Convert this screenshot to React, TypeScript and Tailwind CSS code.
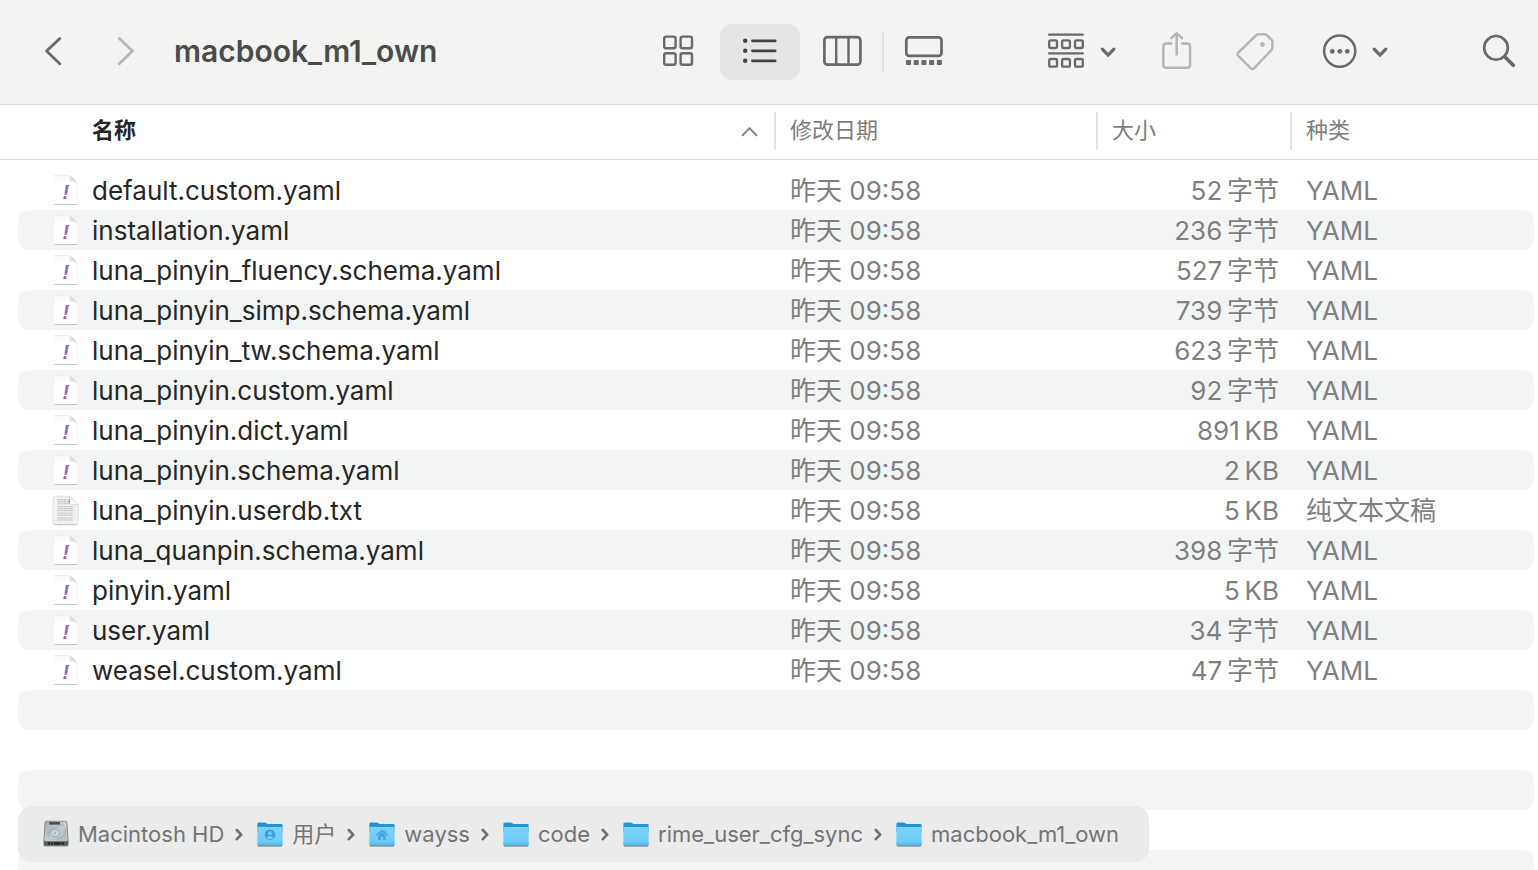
import type { ReactNode } from 'react';

type FileKind = 'yaml' | 'text';

interface FileEntry {
  name: string;
  date: string;
  size: string;
  type: string;
  icon: FileKind;
}

const yaml = (name: string, size: string): FileEntry => ({
  name,
  date: '昨天 09:58',
  size,
  type: 'YAML',
  icon: 'yaml',
});

const files: FileEntry[] = [
  yaml('default.custom.yaml', '52\u2009字节'),
  yaml('installation.yaml', '236\u2009字节'),
  yaml('luna_pinyin_fluency.schema.yaml', '527\u2009字节'),
  yaml('luna_pinyin_simp.schema.yaml', '739\u2009字节'),
  yaml('luna_pinyin_tw.schema.yaml', '623\u2009字节'),
  yaml('luna_pinyin.custom.yaml', '92\u2009字节'),
  yaml('luna_pinyin.dict.yaml', '891\u2009KB'),
  yaml('luna_pinyin.schema.yaml', '2\u2009KB'),
  { name: 'luna_pinyin.userdb.txt', date: '昨天 09:58', size: '5\u2009KB', type: '纯文本文稿', icon: 'text' },
  yaml('luna_quanpin.schema.yaml', '398\u2009字节'),
  yaml('pinyin.yaml', '5\u2009KB'),
  yaml('user.yaml', '34\u2009字节'),
  yaml('weasel.custom.yaml', '47\u2009字节'),
];

const emptyRows = [13, 14, 15, 16, 17];

function YamlIcon() {
  return (
    <svg className="h-8 w-7 shrink-0" viewBox="0 0 28 32" aria-hidden="true">
      <defs>
        <linearGradient id="fold" x1="0" y1="1" x2="1" y2="0">
          <stop offset="0" stopColor="#fafafa" />
          <stop offset="0.5" stopColor="#dcdcdc" />
          <stop offset="1" stopColor="#f4f4f4" />
        </linearGradient>
        <linearGradient id="sheet" x1="0" y1="0" x2="0" y2="1">
          <stop offset="0" stopColor="#f7f7f7" />
          <stop offset="0.3" stopColor="#ffffff" />
        </linearGradient>
      </defs>
      <path d="M2.5 1.2H16.5Q21 2.5 25.2 9.5V30.5H2.5Z" fill="url(#sheet)" />
      <path d="M25.3 9.5V30.3" stroke="#f0f0f0" strokeWidth="0.7" />
      <path d="M2.5 1.4H16" stroke="#e6e6e6" strokeWidth="0.9" />
      <path d="M16 1.2C18.2 2.6 17.6 5.4 17.8 7.2C20.6 7 23.6 7.4 25.2 10C24.4 6 20.5 1.8 16 1.2Z" fill="url(#fold)" />
      <path d="M2.5 30.5H25.4" stroke="#c8c8c8" strokeWidth="1" />
      <text x="10.6" y="24.6" fontFamily="Liberation Sans, sans-serif" fontSize="20" fontWeight="700" fontStyle="italic" fill="#9163b3">
        !
      </text>
    </svg>
  );
}

function TextIcon() {
  return (
    <svg className="h-8 w-7 shrink-0" viewBox="0 0 28 32" aria-hidden="true">
      <path d="M3 2.2H17.5L26.3 10.6V28.5Q26.3 30.6 24.2 30.6H3Q1 30.6 1 28.5V4.2Q1 2.2 3 2.2Z" fill="#f1f1f1" stroke="#dadada" strokeWidth="0.8" />
      <path d="M2 30.7H25.4" stroke="#bcbcbc" strokeWidth="0.8" />
      <path
        d="M5.5 5.8H16M5.5 7.8H16.5M5.5 9.8H17M5.5 12.6H21.5M5.5 14.6H20.5M5.5 16.6H21.5M5.5 19.2H21M5.5 21.2H21.5M5.5 24H21M5.5 26H20.5"
        stroke="#bdbdbd"
        strokeWidth="1"
        strokeDasharray="3.2 0.5 1.8 0.4"
      />
      <path d="M17.5 2.2L26.3 10.6H19.2Q17.5 10.6 17.5 8.8Z" fill="#fafafa" stroke="#d0d0d0" strokeWidth="0.6" />
      <path d="M17.3 5V9.6" stroke="#8c8c8c" strokeWidth="1" />
    </svg>
  );
}

function FolderIcon({ badge }: { badge?: ReactNode }) {
  return (
    <svg className="h-7 w-[26px] shrink-0" viewBox="0 0 26 28" aria-hidden="true">
      <defs>
        <linearGradient id="front" x1="0" y1="0" x2="0" y2="1">
          <stop offset="0" stopColor="#79d2fb" />
          <stop offset="1" stopColor="#6bc8f7" />
        </linearGradient>
      </defs>
      <path d="M1 26.4H25" stroke="#a9a9a9" strokeWidth="1" />
      <path d="M0.4 4Q0.4 2.6 1.8 2.6H7.6Q8.6 2.6 9.4 3.2L10.4 3.9H24.2Q25.6 3.9 25.6 5.3V12H0.4Z" fill="#1e93d6" />
      <path d="M0.4 7.2H25.6V24.6Q25.6 26 24.2 26H1.8Q0.4 26 0.4 24.6Z" fill="url(#front)" />
      <path d="M0.4 7.4H25.6" stroke="#8edbfd" strokeWidth="0.8" />
      <path d="M0.4 22.6H25.6V24.6Q25.6 26 24.2 26H1.8Q0.4 26 0.4 24.6Z" fill="#5dbdf0" />
      <path d="M0.8 25.5H25.2" stroke="#3b9dd4" strokeWidth="0.8" />
      {badge}
    </svg>
  );
}

const personBadge = (
  <>
    <circle cx="13" cy="14.8" r="5.2" fill="#369fd9" />
    <circle cx="13" cy="13.2" r="1.9" fill="#74cefa" />
    <path d="M9.6 18Q10.4 15.9 13 15.9T16.4 18Q15 19.3 13 19.3T9.6 18Z" fill="#74cefa" />
  </>
);

const homeBadge = (
  <>
    <path d="M7.8 15L13 10.2L18.2 15" fill="none" stroke="#3fa5de" strokeWidth="1.3" strokeLinecap="round" strokeLinejoin="round" />
    <path d="M16 10.4H17.2V13H16Z" fill="#3fa5de" />
    <path d="M9.2 15.4L13 12L16.8 15.4V20H14.2V16.8H11.8V20H9.2Z" fill="#3fa5de" />
  </>
);

function DriveIcon() {
  return (
    <svg className="h-7 w-[26px] shrink-0" viewBox="0 0 26 28" aria-hidden="true">
      <defs>
        <linearGradient id="drive" x1="0" y1="0" x2="1" y2="1">
          <stop offset="0" stopColor="#a2aaae" />
          <stop offset="0.5" stopColor="#c3cdd2" />
          <stop offset="1" stopColor="#b0babf" />
        </linearGradient>
      </defs>
      <path d="M3.4 0.8H22.6Q24.2 0.8 24.4 2.4L25.6 21V24.4Q25.6 26.6 23.4 26.6H2.6Q0.4 26.6 0.4 24.4V21L1.6 2.4Q1.8 0.8 3.4 0.8Z" fill="#7f8588" />
      <path d="M3.6 1.4H22.4Q23.4 1.4 23.5 2.4L24.7 19.6Q24.7 21 23.4 21H2.6Q1.3 21 1.3 19.6L2.5 2.4Q2.6 1.4 3.6 1.4Z" fill="url(#drive)" />
      <path d="M6.2 2H17V4.6H6.2Z" fill="#4b4e51" />
      <path d="M20.4 5C15 4.6 15.6 8 10.8 8.2C5.6 9 3.6 14 6.2 17.6M22.6 8.6C23 14 19.8 18 14.4 18.8" fill="none" stroke="#929ca1" strokeWidth="0.7" />
      <ellipse cx="12" cy="13.2" rx="4.4" ry="3.4" fill="#cdd6db" stroke="#98a2a7" strokeWidth="0.8" />
      <circle cx="12" cy="13.2" r="1" fill="#98a2a7" />
      <path d="M1.2 21.8H24.8V24.4Q24.8 25.6 23.4 25.6H2.6Q1.2 25.6 1.2 24.4Z" fill="#56595b" />
      <path d="M5 22.4H21V24.6H5Z" fill="#1f2122" />
      <path d="M7.6 22.6V24.4M10.4 22.6V24.4M18 22.6V24.4" stroke="#8b8b8b" strokeWidth="0.8" />
      <path d="M2 26.4H24" stroke="#c9cccd" strokeWidth="0.6" />
    </svg>
  );
}

const places: { label: string; icon: ReactNode }[] = [
  { label: 'Macintosh HD', icon: <DriveIcon /> },
  { label: '用户', icon: <FolderIcon badge={personBadge} /> },
  { label: 'wayss', icon: <FolderIcon badge={homeBadge} /> },
  { label: 'code', icon: <FolderIcon /> },
  { label: 'rime_user_cfg_sync', icon: <FolderIcon /> },
  { label: 'macbook_m1_own', icon: <FolderIcon /> },
];

function ToolButton({ label, className, width, children }: { label: string; className: string; width: number; children: ReactNode }) {
  return (
    <button type="button" aria-label={label} className={`h-14 shrink-0 ${className}`}>
      <svg
        className="h-full w-full"
        viewBox={`0 0 ${width} 56`}
        fill="none"
        stroke="currentColor"
        strokeWidth="2.5"
        strokeLinecap="round"
        strokeLinejoin="round"
        aria-hidden="true"
      >
        {children}
      </svg>
    </button>
  );
}

function Toolbar() {
  return (
    <header className="flex shrink-0 items-center border-b border-[#d8d8d7] bg-[#f3f3f1] py-6 pr-[10px] pl-[26px] text-[#696967]">
      <ToolButton label="后退" className="w-14" width={56}>
        <path d="M33.8 14.4L20.6 27.1L33.8 39.8" strokeWidth="2.8" />
      </ToolButton>
      <ToolButton label="前进" className="ml-4 w-14 text-[#b5b5b3]" width={56}>
        <path d="M21.3 14.4L34.5 27.1L21.3 39.8" strokeWidth="2.8" />
      </ToolButton>
      <h1 className="ml-5 min-w-0 flex-1 truncate pb-[2px] text-[30px] leading-[54px] font-semibold text-[#4b4b4b]">macbook_m1_own</h1>

      <div className="flex items-center gap-[2px]" role="group" aria-label="显示方式">
        <ToolButton label="图标" className="w-20" width={80}>
          <g strokeWidth="2.4">
            <rect x="26.2" y="12.6" width="11.4" height="11.6" rx="2" />
            <rect x="42.6" y="12.6" width="11.4" height="11.6" rx="2" />
            <rect x="26.2" y="29.2" width="11.4" height="11.6" rx="2" />
            <rect x="42.6" y="29.2" width="11.4" height="11.6" rx="2" />
          </g>
        </ToolButton>
        <ToolButton label="列表" className="w-20 rounded-xl bg-[#e5e5e4] text-[#434342]" width={80}>
          <path d="M32.4 16.8H55.2M32.4 26.8H55.2M32.4 36.8H55.2" strokeWidth="2.7" />
          <g fill="currentColor" stroke="none">
            <circle cx="25.2" cy="16.8" r="2.2" />
            <circle cx="25.2" cy="26.8" r="2.2" />
            <circle cx="25.2" cy="36.8" r="2.2" />
          </g>
        </ToolButton>
        <ToolButton label="分栏" className="w-20" width={80}>
          <rect x="22.4" y="13.1" width="36" height="27.6" rx="3.2" strokeWidth="2.7" />
          <path d="M34.2 13.1V40.7M46.5 13.1V40.7" strokeWidth="2.4" />
        </ToolButton>
      </div>
      <span className="h-10 w-[2px] shrink-0 bg-[#e4e4e3]" />
      <ToolButton label="画廊" className="w-20" width={80}>
        <rect x="22.3" y="13.3" width="35.2" height="18.6" rx="3" strokeWidth="2.7" />
        <g fill="currentColor" stroke="none">
          <rect x="22" y="36" width="5" height="5" rx="0.8" />
          <rect x="29.7" y="36" width="5" height="5" rx="0.8" />
          <rect x="37.4" y="36" width="5" height="5" rx="0.8" />
          <rect x="45.1" y="36" width="5" height="5" rx="0.8" />
          <rect x="52.9" y="36" width="5" height="5" rx="0.8" />
        </g>
      </ToolButton>

      <ToolButton label="群组" className="ml-[76px] w-[84px]" width={84}>
        <g strokeWidth="2.3">
          <path d="M9.1 10.7H42.9M9.1 29.4H42.9" />
          <rect x="9.2" y="16.3" width="7.8" height="7.7" rx="1.4" />
          <rect x="22.1" y="16.3" width="7.8" height="7.7" rx="1.4" />
          <rect x="35" y="16.3" width="7.8" height="7.7" rx="1.4" />
          <rect x="9.2" y="35" width="7.8" height="7.7" rx="1.4" />
          <rect x="22.1" y="35" width="7.8" height="7.7" rx="1.4" />
          <rect x="35" y="35" width="7.8" height="7.7" rx="1.4" />
        </g>
        <path d="M62.3 25.2L68.1 31.2L73.9 25.2" strokeWidth="3.2" />
      </ToolButton>
      <ToolButton label="共享" className="ml-6 w-[58px] text-[#b5b5b3]" width={58}>
        <path d="M23.2 19.6H18.4Q15.3 19.6 15.3 22.7V40.7Q15.3 43.8 18.4 43.8H39Q42.1 43.8 42.1 40.7V22.7Q42.1 19.6 39 19.6H34.2M28.7 9.6V30.4M23.4 14.2L28.7 9.2L34 14.2" />
      </ToolButton>
      <ToolButton label="编辑标签" className="ml-5 w-[58px] text-[#b5b5b3]" width={58}>
        <path d="M32.6 10.3H38.8Q40 10.3 40.8 11.1L45.6 15.9Q46.4 16.7 46.4 17.9V23.6Q46.4 25 45.5 26L28.2 44.2Q26.4 46 24.6 44.2L12.3 31.9Q10.8 30.2 12.4 28.5L30 11.3Q31 10.3 32.6 10.3Z" />
        <circle cx="36.4" cy="20.5" r="2.4" fill="currentColor" stroke="none" />
      </ToolButton>
      <ToolButton label="更多" className="ml-8 w-20" width={80}>
        <circle cx="23.7" cy="27.1" r="15.6" />
        <g fill="currentColor" stroke="none">
          <circle cx="16.3" cy="27.3" r="2.4" />
          <circle cx="23.8" cy="27.3" r="2.4" />
          <circle cx="31.3" cy="27.3" r="2.4" />
        </g>
        <path d="M58.2 25.2L64 31.2L69.8 25.2" strokeWidth="3.2" />
      </ToolButton>
      <ToolButton label="搜索" className="ml-[74px] w-[58px]" width={58}>
        <circle cx="26" cy="23.8" r="11.8" strokeWidth="2.7" />
        <path d="M35 33L43.3 41.2" strokeWidth="3.7" />
      </ToolButton>
    </header>
  );
}

function ColumnHeader({ label }: { label: string }) {
  return (
    <th scope="col" className="border-b border-[#dadada] px-0 pt-[7px] pb-[9px] text-left font-normal text-[#7d7d7d]">
      <button type="button" className="flex h-[38px] w-full items-center border-l-2 border-[#e3e3e3] pb-[2px] pl-[14px]">
        {label}
      </button>
    </th>
  );
}

function FileTable() {
  return (
    <table className="w-full table-fixed border-separate border-spacing-0">
      <colgroup>
        <col />
        <col className="w-[322px]" />
        <col className="w-[194px]" />
        <col className="w-[248px]" />
      </colgroup>
      <thead className="text-[22px]">
        <tr>
          <th scope="col" aria-sort="ascending" className="border-b border-[#dadada] px-0 pt-[7px] pb-[9px] text-left font-bold text-[#262626]">
            <button type="button" className="flex h-[38px] w-full items-center justify-between pr-4 pl-[92px]">
              <span className="pb-[2px]">名称</span>
              <svg className="h-4 w-[18px] text-[#7d7d7d]" viewBox="0 0 18 16" fill="none" stroke="currentColor" strokeWidth="1.9" strokeLinecap="round" strokeLinejoin="round" aria-hidden="true">
                <path d="M2.6 12.3L9.5 5.2L16.4 12.3" />
              </svg>
            </button>
          </th>
          <ColumnHeader label="修改日期" />
          <ColumnHeader label="大小" />
          <ColumnHeader label="种类" />
        </tr>
      </thead>
      <tbody className="text-[26px] leading-[38px] text-[#7f7f7f] before:block before:h-[10px] before:content-['']">
        {files.map((file) => (
          <tr key={file.name} className="group">
            <td className="h-10 rounded-l-[28px_10px] border-l-[18px] border-transparent bg-clip-padding p-0 pl-[34px] group-even:bg-[#f3f5f4]">
              <div className="flex h-10 items-center gap-3 text-[#262626]">
                {file.icon === 'yaml' ? <YamlIcon /> : <TextIcon />}
                <span className="truncate pt-[2px]">{file.name}</span>
              </div>
            </td>
            <td className="p-0 pt-[2px] pl-4 whitespace-nowrap group-even:bg-[#f3f5f4]">{file.date}</td>
            <td className="p-0 pt-[2px] pr-[11px] text-right whitespace-nowrap group-even:bg-[#f3f5f4]">{file.size}</td>
            <td className="rounded-r-[14px_10px] border-r-4 border-transparent bg-clip-padding p-0 pt-[2px] pl-4 whitespace-nowrap group-even:bg-[#f3f5f4]">
              {file.type}
            </td>
          </tr>
        ))}
        {emptyRows.map((row) => (
          <tr key={row} className="group" aria-hidden="true">
            <td
              colSpan={4}
              className="h-10 rounded-l-[28px_10px] rounded-r-[14px_10px] border-r-4 border-l-[18px] border-transparent bg-clip-padding p-0 group-even:bg-[#f3f5f4]"
            />
          </tr>
        ))}
      </tbody>
    </table>
  );
}

function PathBar() {
  return (
    <nav aria-label="路径" className="absolute bottom-2 left-[18px] h-14 rounded-[14px] bg-[#ebebeb] pr-[30px] pl-[25px]">
      <ol className="flex h-full items-center text-[22px] text-[#747474]">
        {places.map((place, index) => (
          <li key={place.label} className="flex items-center">
            {index > 0 && (
              <svg className="mr-[14px] ml-[11px] h-4 w-2" viewBox="0 0 8 16" fill="none" stroke="#6f6f6f" strokeWidth="2.6" strokeLinecap="round" strokeLinejoin="round" aria-hidden="true">
                <path d="M1.8 4L6.2 8.7L1.8 13.2" />
              </svg>
            )}
            <a href={`#${place.label}`} className="flex items-center gap-[9px] whitespace-nowrap">
              {place.icon}
              {place.label}
            </a>
          </li>
        ))}
      </ol>
    </nav>
  );
}

export default function App() {
  return (
    <div className="relative flex h-screen flex-col overflow-hidden bg-white font-['Inter','Noto_Sans_CJK_SC',sans-serif]">
      <Toolbar />
      <main className="min-h-0 flex-1 overflow-hidden">
        <FileTable />
      </main>
      <PathBar />
    </div>
  );
}
